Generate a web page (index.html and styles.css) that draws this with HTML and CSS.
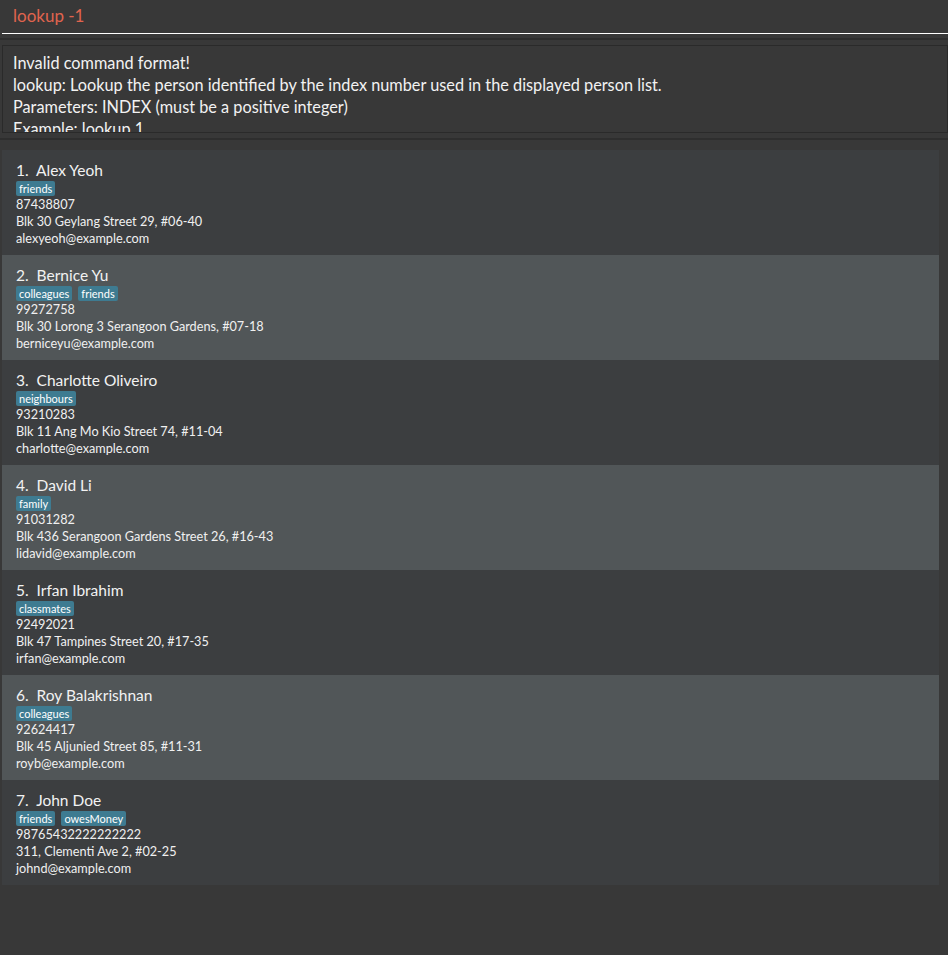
FILE: index.html
```html
<!DOCTYPE html>
<html>
<head>
<meta charset="utf-8">
<link rel="stylesheet" href="styles.css">
</head>
<body>
<div class="app">
  <div class="command">
    <div class="command-text">lookup -1</div>
  </div>
  <div class="result-wrap">
    <div class="result">
      <div>Invalid command format!</div>
      <div>lookup: Lookup the person identified by the index number used in the displayed person list.</div>
      <div>Parameters: INDEX (must be a positive integer)</div>
      <div>Example: lookup 1</div>
    </div>
  </div>
  <div class="list">
    <div class="card">
      <div class="name">1.&nbsp; Alex Yeoh</div>
      <div class="tags"><span class="tag">friends</span></div>
      <div class="line">87438807</div>
      <div class="line">Blk 30 Geylang Street 29, #06-40</div>
      <div class="line">alexyeoh@example.com</div>
    </div>
    <div class="card alt">
      <div class="name">2.&nbsp; Bernice Yu</div>
      <div class="tags"><span class="tag">colleagues</span><span class="tag">friends</span></div>
      <div class="line">99272758</div>
      <div class="line">Blk 30 Lorong 3 Serangoon Gardens, #07-18</div>
      <div class="line">berniceyu@example.com</div>
    </div>
    <div class="card">
      <div class="name">3.&nbsp; Charlotte Oliveiro</div>
      <div class="tags"><span class="tag">neighbours</span></div>
      <div class="line">93210283</div>
      <div class="line">Blk 11 Ang Mo Kio Street 74, #11-04</div>
      <div class="line">charlotte@example.com</div>
    </div>
    <div class="card alt">
      <div class="name">4.&nbsp; David Li</div>
      <div class="tags"><span class="tag">family</span></div>
      <div class="line">91031282</div>
      <div class="line">Blk 436 Serangoon Gardens Street 26, #16-43</div>
      <div class="line">lidavid@example.com</div>
    </div>
    <div class="card">
      <div class="name">5.&nbsp; Irfan Ibrahim</div>
      <div class="tags"><span class="tag">classmates</span></div>
      <div class="line">92492021</div>
      <div class="line">Blk 47 Tampines Street 20, #17-35</div>
      <div class="line">irfan@example.com</div>
    </div>
    <div class="card alt">
      <div class="name">6.&nbsp; Roy Balakrishnan</div>
      <div class="tags"><span class="tag">colleagues</span></div>
      <div class="line">92624417</div>
      <div class="line">Blk 45 Aljunied Street 85, #11-31</div>
      <div class="line">royb@example.com</div>
    </div>
    <div class="card">
      <div class="name">7.&nbsp; John Doe</div>
      <div class="tags"><span class="tag">friends</span><span class="tag">owesMoney</span></div>
      <div class="line">98765432222222222</div>
      <div class="line">311, Clementi Ave 2, #02-25</div>
      <div class="line">johnd@example.com</div>
    </div>
  </div>
</div>
</body>
</html>
```
FILE: styles.css
```css
* { box-sizing: border-box; }
html, body {
  margin: 0;
  padding: 0;
  background: #383838;
  font-family: "Lato", "Open Sans", sans-serif;
  color: #f0f0f0;
}
.app {
  width: 948px;
  height: 955px;
  display: flex;
  flex-direction: column;
}
.command {
  height: 40px;
  padding: 0 0 0 2px;
  border-bottom: 2px solid #2e2e2e;
}
.command-text {
  height: 34px;
  padding: 5px 0 0 11px;
  font-size: 17px;
  line-height: 22px;
  color: #e0644e;
  border-bottom: 1px solid #ffffff;
}
.result-wrap {
  padding: 5px 0 5px 0;
  border-bottom: 2px solid #2e2e2e;
}
.result {
  margin-left: 2px;
  height: 88px;
  overflow: hidden;
  border: 1px solid #2a2a2a;
  padding: 6px 0 0 10px;
  font-size: 16.3px;
  line-height: 22px;
  color: #f2f2f2;
}
.list {
  padding: 10px 9px 0 2px;
  display: flex;
  flex-direction: column;
}
.card {
  height: 105px;
  background: #3c3e40;
  padding: 10px 0 0 14px;
}
.card.alt { background: #515658; }
.name {
  font-size: 15.5px;
  line-height: 20px;
  color: #f2f2f2;
}
.tags {
  display: flex;
  gap: 6px;
  margin-top: 1px;
  height: 15px;
}
.tag {
  background: #3e7b91;
  color: #ffffff;
  font-size: 11px;
  line-height: 15px;
  padding: 0 3px;
  border-radius: 2px;
}
.line {
  font-size: 12.7px;
  line-height: 17px;
  color: #f0f0f0;
}
```
